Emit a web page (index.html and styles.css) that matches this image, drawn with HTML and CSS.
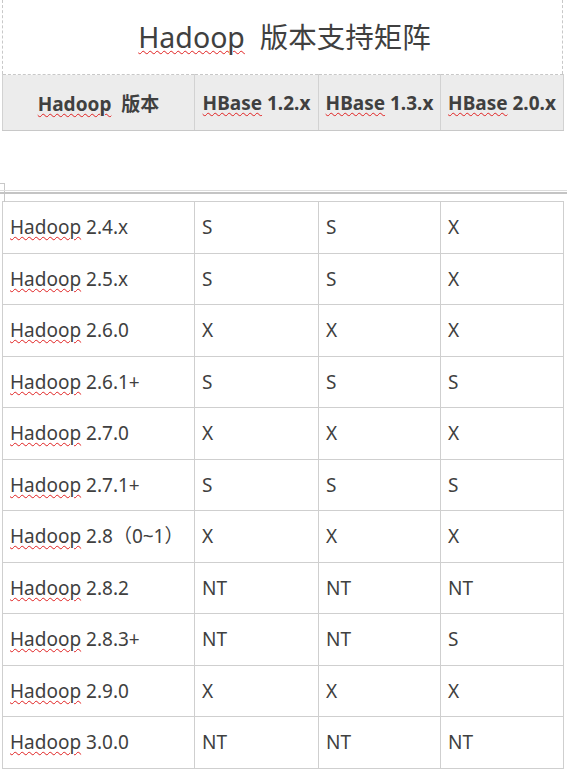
FILE: index.html
```html
<!DOCTYPE html>
<html lang="zh">
<head>
<meta charset="utf-8">
<title>Hadoop 版本支持矩阵</title>
<link rel="stylesheet" href="styles.css">
</head>
<body>
<div class="page">
  <div class="title-box">
    <h1 class="title"><span class="sp">Hadoop</span>&nbsp; 版本支持矩阵</h1>
  </div>
  <table class="grid head">
    <colgroup><col class="c1"><col class="c2"><col class="c3"><col class="c4"></colgroup>
    <tr>
      <th><span class="sp">Hadoop</span>&nbsp; 版本</th>
      <th><span class="sp">HBase</span> 1.2.x</th>
      <th><span class="sp">HBase</span> 1.3.x</th>
      <th><span class="sp">HBase</span> 2.0.x</th>
    </tr>
  </table>
  <div class="gap">
    <div class="corner"></div>
    <div class="rule"></div>
  </div>
  <table class="grid body">
    <colgroup><col class="c1"><col class="c2"><col class="c3"><col class="c4"></colgroup>
    <tr><td><span class="sp">Hadoop</span> 2.4.x</td><td>S</td><td>S</td><td>X</td></tr>
    <tr><td><span class="sp">Hadoop</span> 2.5.x</td><td>S</td><td>S</td><td>X</td></tr>
    <tr><td><span class="sp">Hadoop</span> 2.6.0</td><td>X</td><td>X</td><td>X</td></tr>
    <tr><td><span class="sp">Hadoop</span> 2.6.1+</td><td>S</td><td>S</td><td>S</td></tr>
    <tr><td><span class="sp">Hadoop</span> 2.7.0</td><td>X</td><td>X</td><td>X</td></tr>
    <tr><td><span class="sp">Hadoop</span> 2.7.1+</td><td>S</td><td>S</td><td>S</td></tr>
    <tr><td><span class="sp">Hadoop</span> 2.8（0~1）</td><td>X</td><td>X</td><td>X</td></tr>
    <tr><td><span class="sp">Hadoop</span> 2.8.2</td><td>NT</td><td>NT</td><td>NT</td></tr>
    <tr><td><span class="sp">Hadoop</span> 2.8.3+</td><td>NT</td><td>NT</td><td>S</td></tr>
    <tr><td><span class="sp">Hadoop</span> 2.9.0</td><td>X</td><td>X</td><td>X</td></tr>
    <tr><td><span class="sp">Hadoop</span> 3.0.0</td><td>NT</td><td>NT</td><td>NT</td></tr>
  </table>
</div>
</body>
</html>
```
FILE: styles.css
```css
html, body {
  margin: 0;
  padding: 0;
  background: #ffffff;
}
body {
  font-family: "Noto Sans", "Noto Sans CJK SC", sans-serif;
  color: #404040;
}
.page {
  width: 567px;
}
.title-box {
  margin-left: 2px;
  width: 559px;
  height: 74px;
  border-left: 1px dashed #c8c8c8;
  border-right: 1px dashed #c8c8c8;
  display: flex;
  align-items: center;
  justify-content: center;
}
.title {
  margin: 0;
  font-size: 28.5px;
  font-weight: 400;
  line-height: 1;
  color: #404040;
  padding-left: 4px;
}
.sp {
  text-decoration: underline wavy #e02020;
  text-decoration-thickness: 1px;
  text-underline-offset: 2px;
}
.grid {
  margin-left: 2px;
  border-collapse: collapse;
  table-layout: fixed;
  width: 561px;
}
.c1 { width: 192px; }
.c2 { width: 124px; }
.c3 { width: 122px; }
.c4 { width: 123px; }
.head th {
  height: 55px;
  padding: 0;
  background: #ececec;
  border: 1px solid #d2d2d2;
  border-top: 1px dashed #c8c8c8;
  border-bottom: 1px solid #c8c8c8;
  font-size: 19px;
  font-weight: 700;
  text-align: center;
  white-space: nowrap;
  color: #404040;
}
.gap {
  position: relative;
  height: 70px;
}
.corner {
  position: absolute;
  left: 0;
  top: 52px;
  width: 4px;
  height: 18px;
  border-top: 1px solid #c8c8c8;
  border-right: 1px solid #c8c8c8;
}
.rule {
  position: absolute;
  left: 0;
  right: 0;
  top: 59px;
  height: 1px;
  border-top: 1px solid #dcdcdc;
  border-bottom: 2px solid #c4c4c4;
}
.body td {
  height: 50.5px;
  padding: 0 0 0 7px;
  line-height: 24px;
  border: 1px solid #cfcfcf;
  font-size: 19px;
  white-space: nowrap;
  color: #404040;
}
```
